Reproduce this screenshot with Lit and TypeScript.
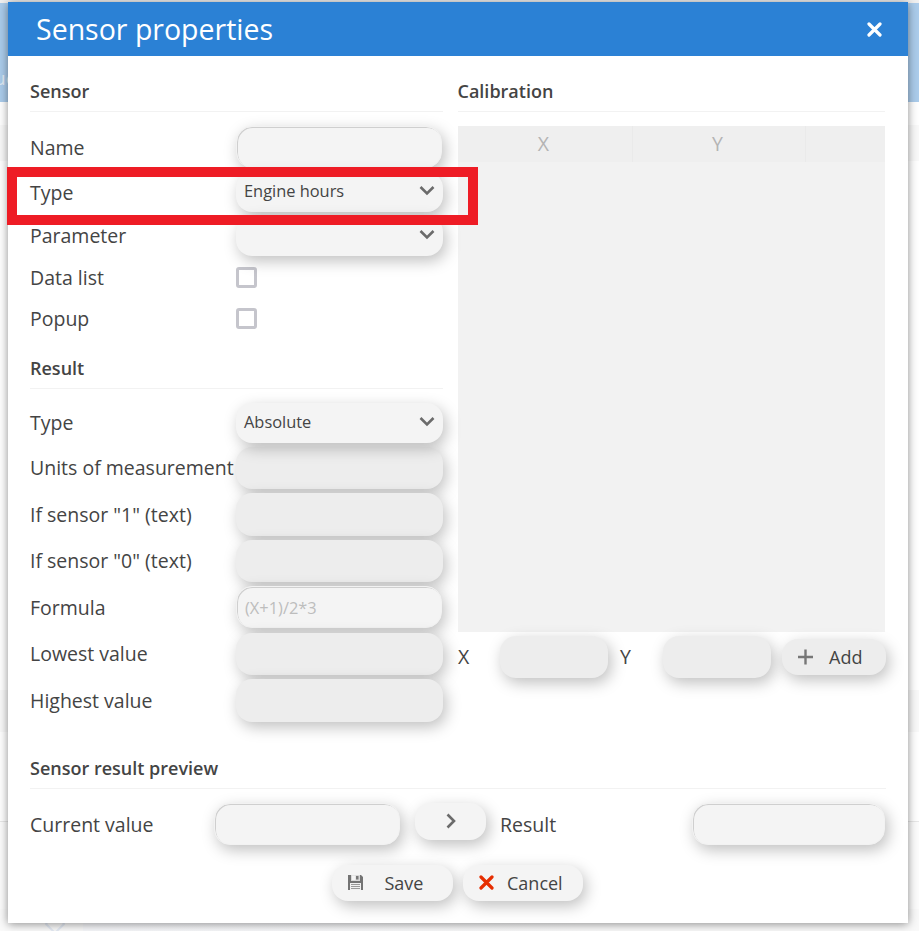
import { LitElement, html, css, svg, nothing } from "lit";
import { customElement } from "lit/decorators.js";

type Kind = "input" | "select" | "disabled" | "check";
interface Field {
  id: string;
  label: string;
  kind: Kind;
  value?: string;
  placeholder?: string;
}

const SENSOR: Field[] = [
  { id: "name", label: "Name", kind: "input" },
  { id: "type", label: "Type", kind: "select", value: "Engine hours" },
  { id: "param", label: "Parameter", kind: "select", value: "" },
  { id: "datalist", label: "Data list", kind: "check" },
  { id: "popup", label: "Popup", kind: "check" },
];

const RESULT: Field[] = [
  { id: "rtype", label: "Type", kind: "select", value: "Absolute" },
  { id: "units", label: "Units of measurement", kind: "disabled" },
  { id: "one", label: 'If sensor "1" (text)', kind: "disabled" },
  { id: "zero", label: 'If sensor "0" (text)', kind: "disabled" },
  { id: "formula", label: "Formula", kind: "input", placeholder: "(X+1)/2*3" },
  { id: "low", label: "Lowest value", kind: "disabled" },
  { id: "high", label: "Highest value", kind: "disabled" },
];

const chevron = svg`<path d="M1.5 2 L8 8.4 L14.5 2" fill="none" stroke="#6b6b6b" stroke-width="2.6"/>`;

@customElement("app-root")
export class AppRoot extends LitElement {
  static styles = css`
    :host {
      display: block;
      position: relative;
      width: 919px;
      height: 931px;
      overflow: hidden;
      background: #fff;
      font-family: "Open Sans", "Noto Sans", sans-serif;
      font-size: 19.5px;
      color: #444;
    }
    * { box-sizing: border-box; }
    .backdrop {
      position: absolute;
      inset: 0;
      display: grid;
      grid-template-rows: 3px 99px 23px 36px 529px 42px 90px 87px 22px;
    }
    .strip { background: #f0f0f0; }
    .band {
      background: #abcceb;
      color: #e3edf6;
      font-size: 19px;
      line-height: 26px;
      padding-top: 62px;
      white-space: nowrap;
    }
    .band span { margin-left: -6px; }
    .tint { background: #f9f9f9; }
    .edge { border-bottom: 1px solid #e8e8e8; }
    .pale { background: #fcfcfc; }
    .foot { background: linear-gradient(90deg, #fafafa 83px, #f6f7fa 83px, #f9f9f9 600px); padding: 8px 0 0 45px; }
    .foot svg { display: block; }
    .dialog {
      position: absolute;
      left: 8px;
      top: 2px;
      width: 900px;
      height: 921px;
      background: #fff;
      box-shadow: 0 1px 9px rgba(0, 0, 0, 0.45);
      display: flex;
      flex-direction: column;
    }
    .title {
      flex: none;
      height: 54px;
      background: #2b81d5;
      color: #fff;
      display: flex;
      align-items: center;
      justify-content: space-between;
      padding: 0 26px 0 28px;
      font-size: 28.5px;
      line-height: 54px;
    }
    .columns {
      display: grid;
      grid-template-columns: 413px 427px;
      column-gap: 15px;
      padding: 0 22px;
      height: 688px;
    }
    .head {
      height: 56px;
      padding-top: 22px;
      border-bottom: 1px solid #f2f2f2;
      font-size: 18px;
      font-weight: 600;
      line-height: 26px;
    }
    .head.cal { text-indent: -0.5px; }
    .head.result { height: 49px; padding-top: 15px; }
    .sensor-rows {
      display: grid;
      padding-top: 12px;
      grid-template-rows: 46px 45px 42px 41px 42px;
    }
    .result-rows {
      display: grid;
      padding-top: 11px;
      grid-template-rows: 45px 46px 47px 46px 47px 46px 47px;
    }
    .row {
      display: grid;
      grid-template-columns: 206px 207px;
    }
    .label { align-self: center; white-space: nowrap; line-height: 26px; }
    .row .label.name { padding: 2px 0 0; }
    .box {
      border-radius: 16px;
      box-shadow: 3px 5px 15px rgba(0, 0, 0, 0.25);
      background: #f4f4f4;
      height: 42px;
      margin-top: 2px;
      font-size: 16.4px;
      display: flex;
      align-items: center;
      padding: 0 8px;
    }
    .box.input {
      border: 1px solid #f2f2f2;
      box-shadow: inset 1px 1px 0 #cfcfcf, 3px 5px 15px rgba(0, 0, 0, 0.25);
      color: #bdbdbd;
      margin-right: 1px;
    }
    .box.formula { padding-top: 1px; }
    .box.disabled { background: #ededed; }
    .box.select {
      position: relative;
      z-index: 1;
      height: 40px;
      margin-top: 2px;
      justify-content: space-between;
      padding: 0 8px 2px 8px;
    }
    .box.select span { margin-bottom: 2px; }
    .box.select svg { margin-bottom: 2px; }
    .box.param { margin-top: 1px; }
    .box.rtype { margin-top: 3px; }
    .box.one, .box.high { height: 43px; }
    .check {
      width: 21px;
      height: 21px;
      margin-top: 10px;
      border: 3px solid #c5c5cc;
      border-radius: 3px;
      background: #fff;
    }
    .table {
      margin-top: 14px;
      height: 506px;
      background: #f2f2f2;
    }
    .thead {
      height: 36px;
      display: grid;
      grid-template-columns: 175px 173px 79px;
      background: #efefef;
      color: #b4b4b4;
      text-align: center;
      line-height: 35px;
    }
    .thead div { border-right: 1px solid #eaeaea; padding-right: 3px; }
    .thead div:last-child { border: none; }
    .addrow {
      display: grid;
      grid-template-columns: 42px 108px 12px 43px 108px 11px 104px;
      height: 50px;
      align-items: center;
    }
    .addrow .axis { padding-bottom: 2px; }
    .addrow .box { margin-top: 0; }
    .addrow .y { grid-column: 4; }
    .addrow .yb { grid-column: 5; }
    .addrow .btn { grid-column: 7; }
    .btn {
      height: 36px;
      border-radius: 16px;
      background: #f4f4f4;
      box-shadow: 3px 5px 15px rgba(0, 0, 0, 0.25);
      display: flex;
      align-items: center;
      font-size: 18px;
      line-height: 26px;
    }
    .btn.add { background: #ededed; padding-left: 15px; gap: 15px; }
    .head.preview { height: 45px; padding-top: 11px; margin: 0 22px; }
    .preview-row {
      display: grid;
      grid-template-columns: 184px 187px 14px 71px 14px 192px 194px;
      padding: 0 22px;
      height: 72px;
      align-items: start;
    }
    .preview-row .label { align-self: start; margin-top: 23px; }
    .preview-row .box { margin-top: 14px; height: 42px; }
    .preview-row .go {
      grid-column: 4;
      margin-top: 14px;
      height: 37px;
      justify-content: center;
    }
    .preview-row .go svg { margin-bottom: 1px; }
    .preview-row .res { grid-column: 6; }
    .actions {
      display: flex;
      gap: 10px;
      padding: 4px 0 0 324px;
    }
    .save { width: 121px; padding-left: 16px; gap: 21.5px; }
    .cancel { width: 120px; padding-left: 16px; gap: 13px; }
    .btn.save svg, .btn.cancel svg { margin-bottom: 1px; }
    .callout {
      position: absolute;
      left: 7px;
      top: 167px;
      width: 471px;
      height: 58px;
      border: 10px solid #ee1c25;
      z-index: 3;
    }
  `;

  private control(f: Field) {
    if (f.kind === "check") return html`<div class="check"></div>`;
    return html`<div class="box ${f.kind} ${f.id}">
      <span>${f.value ?? f.placeholder ?? ""}</span>
      ${f.kind === "select"
        ? html`<svg width="16" height="11" viewBox="0 0 16 11">${chevron}</svg>`
        : nothing}
    </div>`;
  }

  private rows(fields: Field[]) {
    return fields.map(
      (f) => html`<div class="row"><div class="label ${f.id}">${f.label}</div>${this.control(f)}</div>`
    );
  }

  render() {
    return html`
      <div class="backdrop">
        <div class="strip"></div>
        <div class="band"><span>ue</span></div>
        <div></div>
        <div class="tint"></div>
        <div></div>
        <div class="tint"></div>
        <div class="edge"></div>
        <div class="pale"></div>
        <div class="foot">
          <svg width="20" height="14" viewBox="0 0 20 14">
            <path d="M5 2H15L19 7L10 16L1 7Z" fill="none" stroke="#e4eaf4" stroke-width="2" />
          </svg>
        </div>
      </div>
      <div class="dialog">
        <div class="title">
          <span>Sensor properties</span>
          <svg width="15" height="15" viewBox="0 0 15 15">
            <path d="M2 2L13 13M13 2L2 13" stroke="#fff" stroke-width="3.2" stroke-linecap="round" />
          </svg>
        </div>
        <div class="columns">
          <div>
            <div class="head">Sensor</div>
            <div class="sensor-rows">${this.rows(SENSOR)}</div>
            <div class="head result">Result</div>
            <div class="result-rows">${this.rows(RESULT)}</div>
          </div>
          <div>
            <div class="head cal">Calibration</div>
            <div class="table">
              <div class="thead"><div>X</div><div>Y</div><div></div></div>
            </div>
            <div class="addrow">
              <span class="axis">X</span>
              <div class="box disabled"></div>
              <span class="axis y">Y</span>
              <div class="box disabled yb"></div>
              <div class="btn add">
                <svg width="17" height="16" viewBox="0 0 17 16">
                  <path d="M8.5 0.5V15.5M1 8H16" stroke="#777" stroke-width="2.4" />
                </svg>
                <span>Add</span>
              </div>
            </div>
          </div>
        </div>
        <div class="head preview">Sensor result preview</div>
        <div class="preview-row">
          <div class="label">Current value</div>
          <div class="box input"></div>
          <div class="btn go">
            <svg width="10" height="16" viewBox="0 0 10 16">
              <path d="M1.5 1.5L8 8L1.5 14.5" fill="none" stroke="#6b6b6b" stroke-width="2.6" />
            </svg>
          </div>
          <div class="label res">Result</div>
          <div class="box input"></div>
        </div>
        <div class="actions">
          <div class="btn save">
            <svg width="15" height="15" viewBox="0 0 15 15">
              <path d="M0 0H13L15 2V15H0Z" fill="#737373" />
              <path d="M3 0H12V6H3Z" fill="#d8d8d8" />
              <path d="M4 0.5H7.5V5H4Z" fill="#f4f4f4" />
              <path d="M8 1H10.5V4.5H8Z" fill="#777" />
              <path d="M2 8H13V15H2Z" fill="#f0f0f0" />
              <path d="M3 9.5H12M3 11.5H12M3 13.5H12" stroke="#999" stroke-width="1" />
            </svg>
            <span>Save</span>
          </div>
          <div class="btn cancel">
            <svg width="15" height="15" viewBox="0 0 15 15">
              <path d="M2 2L13 13M13 2L2 13" stroke="#e62e00" stroke-width="3.2" stroke-linecap="round" />
            </svg>
            <span>Cancel</span>
          </div>
        </div>
      </div>
      <div class="callout"></div>
    `;
  }
}
